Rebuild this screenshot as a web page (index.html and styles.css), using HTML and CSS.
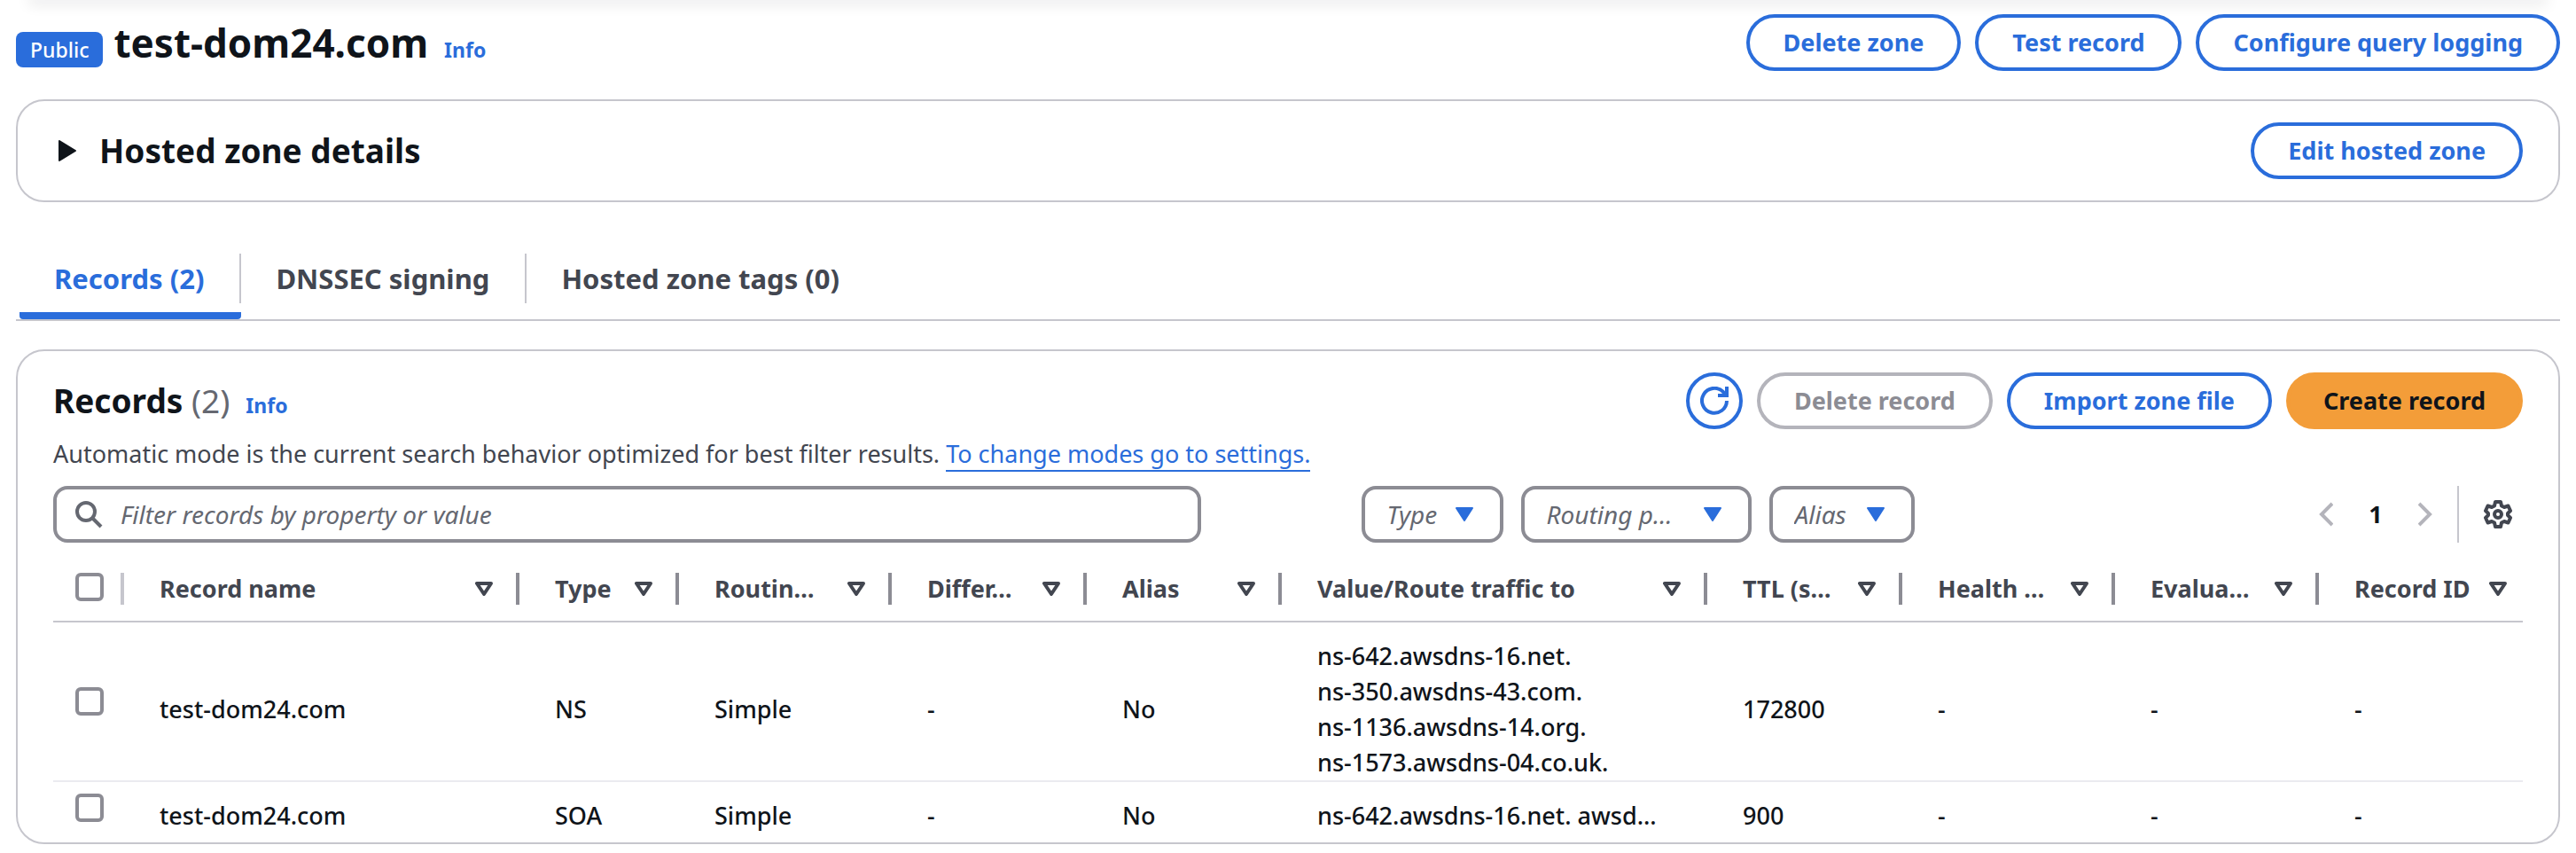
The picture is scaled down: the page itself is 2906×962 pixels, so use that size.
FILE: index.html
```html
<!DOCTYPE html>
<html lang="en">
<head>
<meta charset="utf-8">
<title>test-dom24.com - Hosted zone</title>
<link rel="stylesheet" href="styles.css">
</head>
<body>
<svg class="sprite" aria-hidden="true">
  <symbol id="sort" viewBox="0 0 20 16"><path d="M2 2h16l-8 12z" fill="none" stroke="currentColor" stroke-width="4" stroke-linejoin="round"/></symbol>
  <symbol id="caret" viewBox="0 0 20 16"><path d="M1 1h18l-9 14z" fill="currentColor" stroke="currentColor" stroke-width="2" stroke-linejoin="round"/></symbol>
</svg>
<div class="top-edge"></div>
<main class="page">
  <header class="row zone-header">
    <div class="title-line">
      <span class="badge">Public</span>
      <h1 class="zone-name">test-dom24.com</h1>
      <a class="info" href="#">Info</a>
    </div>
    <div class="actions">
      <button class="btn" type="button">Delete zone</button>
      <button class="btn" type="button">Test record</button>
      <button class="btn" type="button">Configure query logging</button>
    </div>
  </header>

  <section class="panel details row">
    <h2 class="heading details-title">
      <svg class="disclosure" viewBox="0 0 20 24" aria-hidden="true"><path d="M1 1v22l18-11z" fill="currentColor" stroke="currentColor" stroke-width="2" stroke-linejoin="round"/></svg>
      Hosted zone details
    </h2>
    <button class="btn" type="button">Edit hosted zone</button>
  </section>

  <nav class="tabs" role="tablist">
    <button class="tab tab-active" type="button" role="tab" aria-selected="true">Records (2)</button>
    <button class="tab" type="button" role="tab">DNSSEC signing</button>
    <button class="tab" type="button" role="tab">Hosted zone tags (0)</button>
  </nav>

  <section class="panel records">
    <div class="row">
      <div class="title-line">
        <h2 class="heading">Records <span class="counter">(2)</span></h2>
        <a class="info" href="#">Info</a>
      </div>
      <div class="actions">
        <button class="btn btn-icon" type="button" aria-label="Refresh">
          <svg class="icon" viewBox="0 0 32 32" fill="none" stroke="currentColor" stroke-width="4" aria-hidden="true"><path d="M30 16a14 14 0 1 1-4-10l3 4M30 0v10H20"/></svg>
        </button>
        <button class="btn" type="button" disabled>Delete record</button>
        <button class="btn" type="button">Import zone file</button>
        <button class="btn btn-primary" type="button">Create record</button>
      </div>
    </div>
    <p class="description">Automatic mode is the current search behavior optimized for best filter results. <a class="link" href="#">To change modes go to settings.</a></p>

    <div class="toolbar">
      <label class="search">
        <svg class="search-icon" viewBox="0 0 32 32" aria-hidden="true"><circle cx="13" cy="13" r="10" fill="none" stroke="currentColor" stroke-width="4"/><path d="M20 20l10 10" stroke="currentColor" stroke-width="4"/></svg>
        <input class="search-input" type="text" aria-label="Filter records" placeholder="Filter records by property or value">
      </label>
      <div class="filters">
        <label class="picker picker-type"><select class="select" aria-label="Type"><option>Type</option></select><svg class="caret"><use href="#caret"/></svg></label>
        <label class="picker picker-routing"><select class="select" aria-label="Routing policy"><option>Routing p…</option></select><svg class="caret"><use href="#caret"/></svg></label>
        <label class="picker picker-alias"><select class="select" aria-label="Alias"><option>Alias</option></select><svg class="caret"><use href="#caret"/></svg></label>
      </div>
      <div class="paging">
        <button class="page-btn page-step" type="button" aria-label="Previous page" disabled><svg class="chevron" viewBox="0 0 16 28"><path d="M15 2L3 14l12 12" fill="none" stroke="currentColor" stroke-width="4"/></svg></button>
        <button class="page-btn page-current" type="button">1</button>
        <button class="page-btn page-step" type="button" aria-label="Next page" disabled><svg class="chevron" viewBox="0 0 16 28"><path d="M1 2l12 12L1 26" fill="none" stroke="currentColor" stroke-width="4"/></svg></button>
        <button class="page-btn settings" type="button" aria-label="Preferences">
          <svg class="icon" viewBox="0 0 32 32" fill="none" stroke="currentColor" stroke-width="4" stroke-linejoin="round"><circle cx="16" cy="16" r="4"/><path d="M13 2h6l1 4.500 3 1.500 4.500-1.500L30 12l-3 3v2l3 3-2.500 5.500L23 24l-3 1.500L19 30h-6l-1-4.500L9 24l-4.500 1.500L2 20l3-3v-2l-3-3 2.500-5.500L9 8l3-1.500z"/></svg>
        </button>
      </div>
    </div>

    <table class="table">
      <colgroup><col class="c-check"><col class="c-name"><col class="c-type"><col class="c-routing"><col class="c-small"><col class="c-small"><col class="c-value"><col class="c-small"><col class="c-routing"><col class="c-last"><col class="c-last"></colgroup>
      <thead>
        <tr>
          <th class="check"><div class="check-head"><input class="checkbox" type="checkbox" aria-label="Select all records"></div></th>
          <th><div class="head">Record name<svg class="sort"><use href="#sort"/></svg></div></th>
          <th><div class="head">Type<svg class="sort"><use href="#sort"/></svg></div></th>
          <th><div class="head">Routin…<svg class="sort"><use href="#sort"/></svg></div></th>
          <th><div class="head">Differ…<svg class="sort"><use href="#sort"/></svg></div></th>
          <th><div class="head">Alias<svg class="sort"><use href="#sort"/></svg></div></th>
          <th><div class="head">Value/Route traffic to<svg class="sort"><use href="#sort"/></svg></div></th>
          <th><div class="head">TTL (s…<svg class="sort"><use href="#sort"/></svg></div></th>
          <th><div class="head">Health …<svg class="sort"><use href="#sort"/></svg></div></th>
          <th><div class="head">Evalua…<svg class="sort"><use href="#sort"/></svg></div></th>
          <th><div class="head head-last">Record ID<svg class="sort"><use href="#sort"/></svg></div></th>
        </tr>
      </thead>
      <tbody>
        <tr>
          <td class="check"><input class="checkbox" type="checkbox" aria-label="Select NS record"></td>
          <td>test-dom24.com</td><td>NS</td><td>Simple</td><td>-</td><td>No</td>
          <td>ns-642.awsdns-16.net.<br>ns-350.awsdns-43.com.<br>ns-1136.awsdns-14.org.<br>ns-1573.awsdns-04.co.uk.</td>
          <td>172800</td><td>-</td><td>-</td><td>-</td>
        </tr>
        <tr>
          <td class="check"><input class="checkbox" type="checkbox" aria-label="Select SOA record"></td>
          <td>test-dom24.com</td><td>SOA</td><td>Simple</td><td>-</td><td>No</td>
          <td>ns-642.awsdns-16.net. awsd…</td>
          <td>900</td><td>-</td><td>-</td><td>-</td>
        </tr>
      </tbody>
    </table>
  </section>
</main>
</body>
</html>
```

FILE: styles.css
```css
:root {
  --blue: #2a6ddb;
  --ink: #0f141a;
  --body: #424650;
  --muted: #656871;
  --control: #8c8c94;
  --line: #c6c6cd;
  --disabled: #b4b4bb;
}

* { box-sizing: border-box; }

body {
  margin: 0;
  background: #fff;
  color: var(--ink);
  font-family: "Noto Sans", "Open Sans", sans-serif;
  font-size: 27px;
  line-height: 40px;
}

button, input, select { font: inherit; color: inherit; margin: 0; }
h1, h2, p { margin: 0; }
a { color: var(--blue); text-decoration: none; }

.sprite { display: none; }

.top-edge { margin: 0 36px; box-shadow: 0 0 16px 4px rgba(0, 7, 22, 0.12); }

.page { padding: 16px 18px 10px; }

.row { display: flex; justify-content: space-between; align-items: center; }
.title-line { display: flex; align-items: baseline; }
.actions { display: flex; gap: 16px; }

.badge {
  margin-right: 12px;
  padding: 0 16px;
  border-radius: 8px;
  background: var(--blue);
  color: #fff;
  font-size: 23px;
  font-weight: 500;
}
.zone-name { font-size: 44px; line-height: 60px; font-weight: 700; }
.info { margin-left: 18px; font-size: 23px; font-weight: 700; }

.btn {
  height: 64px;
  padding: 0 38px;
  border: 4px solid var(--blue);
  border-radius: 32px;
  background: #fff;
  color: var(--blue);
  font-weight: 700;
  white-space: nowrap;
}
.btn:disabled { border-color: var(--disabled); color: var(--control); }
.btn-primary { border-color: #f39d39; background: #f39d39; color: var(--ink); }
.btn-icon { display: grid; place-items: center; width: 64px; padding: 0; }
.icon { display: block; width: 32px; height: 32px; }

.panel { border: 2px solid var(--line); border-radius: 32px; }
.heading { font-size: 37px; line-height: 48px; font-weight: 700; }

.details { margin-top: 32px; padding: 24px 40px 24px 46px; }
.details-title { display: flex; align-items: center; gap: 26px; }
.disclosure { width: 20px; height: 24px; }

.tabs {
  display: flex;
  margin-top: 48px;
  padding-left: 4px;
  border-bottom: 2px solid var(--line);
}
.tab {
  display: grid;
  grid-template-columns: auto 2px;
  column-gap: 40px;
  align-content: start;
  height: 84px;
  padding: 10px 0 0 39px;
  border: 0;
  background: none;
  color: var(--body);
  font-size: 31px;
  line-height: 56px;
  font-weight: 700;
}
.tab::after { content: ""; height: 56px; background: var(--line); }
.tab:last-child::after { background: none; }
.tab-active {
  border-radius: 4px;
  background: linear-gradient(var(--blue), var(--blue)) bottom / 100% 8px no-repeat;
  color: var(--blue);
}

.records { margin-top: 32px; padding: 24px 40px 10px; }
.counter { color: var(--muted); font-weight: 400; }
.description { margin-top: 8px; color: var(--body); }
.link { border-bottom: 2px solid var(--blue); }

.toolbar { display: flex; align-items: center; margin-top: 16px; }
.search {
  display: flex;
  align-items: center;
  gap: 20px;
  width: 46.5%;
  height: 64px;
  padding: 0 20px;
  border: 4px solid var(--control);
  border-radius: 16px;
  color: var(--muted);
  font-size: 28px;
}
.search-icon { flex: none; width: 32px; height: 32px; }
.search-input { flex: 1; min-width: 0; padding: 0; border: 0; outline: 0; background: none; }
.search-input::placeholder { color: var(--muted); font-style: italic; opacity: 1; }

.filters { display: flex; gap: 20px; margin-left: 181px; }
.picker { display: grid; align-items: center; }
.picker-type { width: 160px; }
.picker-routing { width: 260px; }
.picker-alias { width: 164px; }
.select {
  grid-area: 1 / 1;
  width: 100%;
  height: 64px;
  padding: 0 24px;
  appearance: none;
  border: 4px solid var(--control);
  border-radius: 16px;
  background: #fff;
  color: var(--muted);
  font-size: 28px;
  font-style: italic;
}
.caret {
  grid-area: 1 / 1;
  justify-self: end;
  width: 20px;
  height: 16px;
  margin-right: 34px;
  color: var(--blue);
  pointer-events: none;
}

.paging { display: flex; margin-left: auto; }
.page-btn {
  display: grid;
  place-items: center;
  height: 64px;
  padding: 0;
  border: 0;
  background: none;
}
.page-step { width: 56px; color: var(--disabled); }
.chevron { width: 16px; height: 28px; }
.page-current { width: 56px; font-weight: 700; }
.settings {
  width: 74px;
  margin-left: 8px;
  padding-right: 12px;
  padding-left: 28px;
  border-left: 2px solid var(--line);
  color: var(--body);
}

.table { width: 100%; margin-top: 16px; table-layout: fixed; border-collapse: separate; border-spacing: 0; }
.c-check { width: 80px; }
.c-name { width: 446px; }
.c-type { width: 180px; }
.c-routing { width: 240px; }
.c-small { width: 220px; }
.c-last { width: 230px; }

th {
  height: 74px;
  padding: 0;
  border-bottom: 2px solid var(--line);
  color: var(--body);
  font-weight: 700;
  text-align: left;
}
.head {
  display: flex;
  justify-content: space-between;
  align-items: center;
  height: 36px;
  padding-left: 40px;
  padding-right: 26px;
  border-right: 4px solid var(--control);
  white-space: nowrap;
}
.head-last { padding-right: 18px; border-right: 0; }
.check-head { display: flex; height: 36px; border-right: 4px solid var(--line); }
.sort { flex: none; width: 20px; height: 16px; }

td {
  padding: 18px 0 0 40px;
  border-bottom: 2px solid #ebebf0;
  font-weight: 500;
  white-space: nowrap;
}
tbody tr:last-child td { border-bottom: 0; }
td.check, th.check { padding: 0 0 0 25px; }
.checkbox {
  display: block;
  width: 32px;
  height: 32px;
  appearance: none;
  border: 4px solid var(--control);
  border-radius: 6px;
  background: #fff;
}
```
